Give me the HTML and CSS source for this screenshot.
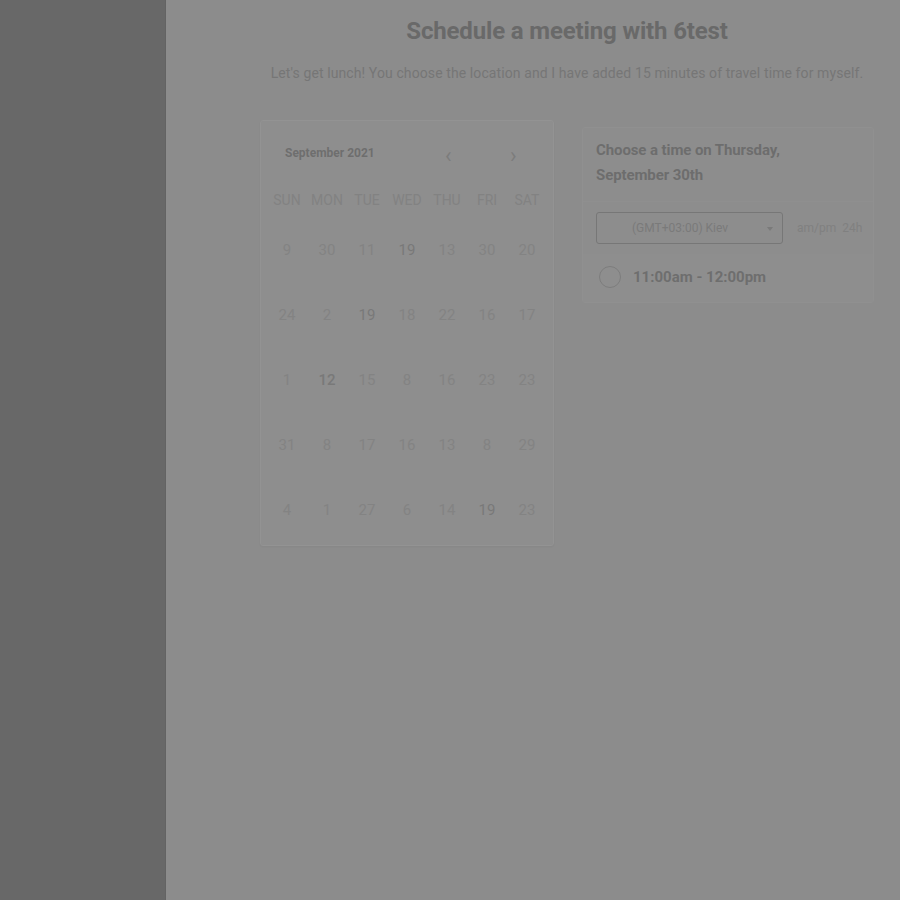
FILE: index.html
```html
<!DOCTYPE html>
<html>
<head>
<meta charset="utf-8">
<link rel="stylesheet" href="styles.css">
</head>
<body>
<div class="app">
  <aside class="sidebar"></aside>
  <main class="main">
    <div class="content">
      <h1 class="title">Schedule a meeting with 6test</h1>
      <p class="subtitle">Let's get lunch! You choose the location and I have added 15 minutes of travel time for myself.</p>
      <div class="panels">
        <section class="calendar">
          <div class="cal-head">
            <span class="month">September 2021</span>
            <span class="arrow prev">&#8249;</span>
            <span class="arrow next">&#8250;</span>
          </div>
          <div class="grid">
            <span class="dow">SUN</span><span class="dow">MON</span><span class="dow">TUE</span><span class="dow">WED</span><span class="dow">THU</span><span class="dow">FRI</span><span class="dow">SAT</span>
            <span class="d">9</span><span class="d">30</span><span class="d">11</span><span class="d on">19</span><span class="d">13</span><span class="d">30</span><span class="d">20</span>
            <span class="d">24</span><span class="d">2</span><span class="d on">19</span><span class="d">18</span><span class="d">22</span><span class="d">16</span><span class="d">17</span>
            <span class="d">1</span><span class="d on b">12</span><span class="d">15</span><span class="d">8</span><span class="d">16</span><span class="d">23</span><span class="d">23</span>
            <span class="d">31</span><span class="d">8</span><span class="d">17</span><span class="d">16</span><span class="d">13</span><span class="d">8</span><span class="d">29</span>
            <span class="d">4</span><span class="d">1</span><span class="d">27</span><span class="d">6</span><span class="d">14</span><span class="d on">19</span><span class="d">23</span>
          </div>
        </section>
        <section class="times">
          <h2 class="times-title">Choose a time on Thursday,<br>September 30th</h2>
          <div class="tz-row">
            <div class="select"><span class="sel-text">(GMT+03:00) Kiev</span><span class="caret"></span></div>
            <span class="fmt">am/pm&nbsp; 24h</span>
          </div>
          <div class="slot">
            <span class="radio"></span>
            <span class="slot-text">11:00am - 12:00pm</span>
          </div>
        </section>
      </div>
    </div>
  </main>
</div>
</body>
</html>
```
FILE: styles.css
```css
* { box-sizing: border-box; }
html, body { margin: 0; padding: 0; height: 100%; }
body { font-family: Roboto, "Liberation Sans", sans-serif; background: #8c8c8c; }
.app { display: flex; height: 900px; }
.sidebar { width: 166px; flex: none; background: #686868; border-right: 1px solid #636363; }
.main { flex: 1; background: #8c8c8c; overflow: hidden; }
.content { width: 614px; margin-left: 94px; display: flex; flex-direction: column; align-items: center; }
.title { margin: 15px 0 0; font-size: 24px; font-weight: 700; color: #696969; letter-spacing: -0.15px; line-height: 32px; white-space: nowrap; }
.subtitle { margin: 16px 0 0; font-size: 14px; color: #767676; line-height: 20px; white-space: nowrap; letter-spacing: 0.1px; }
.panels { display: flex; align-self: stretch; gap: 28px; margin-top: 37px; align-items: flex-start; }
.calendar { width: 294px; height: 426px; border: 1px solid #939393; border-radius: 3px; background: #8e8e8e; box-shadow: 0 1px 2px rgba(0,0,0,0.04); padding: 20px 6px 0 6px; }
.cal-head { display: flex; align-items: center; height: 24px; padding-left: 18px; }
.month { font-size: 12px; font-weight: 700; color: #6e6e6e; width: 160px; }
.arrow { font-size: 22px; color: #7c7c7c; line-height: 24px; margin-top: 6px; }
.prev { width: 65px; }
.grid { display: grid; grid-template-columns: repeat(7, 40px); grid-template-rows: 28px repeat(5, 65px); margin-top: 21px; }
.dow { font-size: 14px; color: #828282; text-align: center; line-height: 28px; }
.d { font-size: 15px; color: #838383; text-align: center; padding-top: 16px; line-height: 40px; }
.d.on { color: #797979; }
.d.b { font-weight: 500; }
.times { width: 292px; margin-top: 7px; border: 1px solid #909090; border-radius: 3px; background: #8d8d8d; }
.times-title { margin: 0; padding: 10px 13px 13px; font-size: 15px; font-weight: 700; color: #6d6d6d; line-height: 25px; letter-spacing: -0.1px; border-bottom: 1px solid #8f8f8f; }
.tz-row { display: flex; align-items: center; padding: 10px 13px 10px; }
.select { width: 187px; height: 32px; flex: none; border: 1px solid #777; border-radius: 3px; display: flex; align-items: center; position: relative; padding-left: 35px; }
.sel-text { font-size: 12px; color: #7a7a7a; }
.caret { position: absolute; right: 9px; top: 14px; width: 0; height: 0; border-left: 3px solid transparent; border-right: 3px solid transparent; border-top: 4px solid #7a7a7a; }
.fmt { margin-left: 14px; font-size: 12px; color: #808080; white-space: nowrap; }
.slot { display: flex; align-items: center; padding: 12px 16px 14px; background: #8e8e8e; }
.radio { width: 22px; height: 22px; border: 1.5px solid #7d7d7d; border-radius: 50%; flex: none; }
.slot-text { margin-left: 12px; font-size: 15px; font-weight: 700; color: #6e6e6e; }
```
